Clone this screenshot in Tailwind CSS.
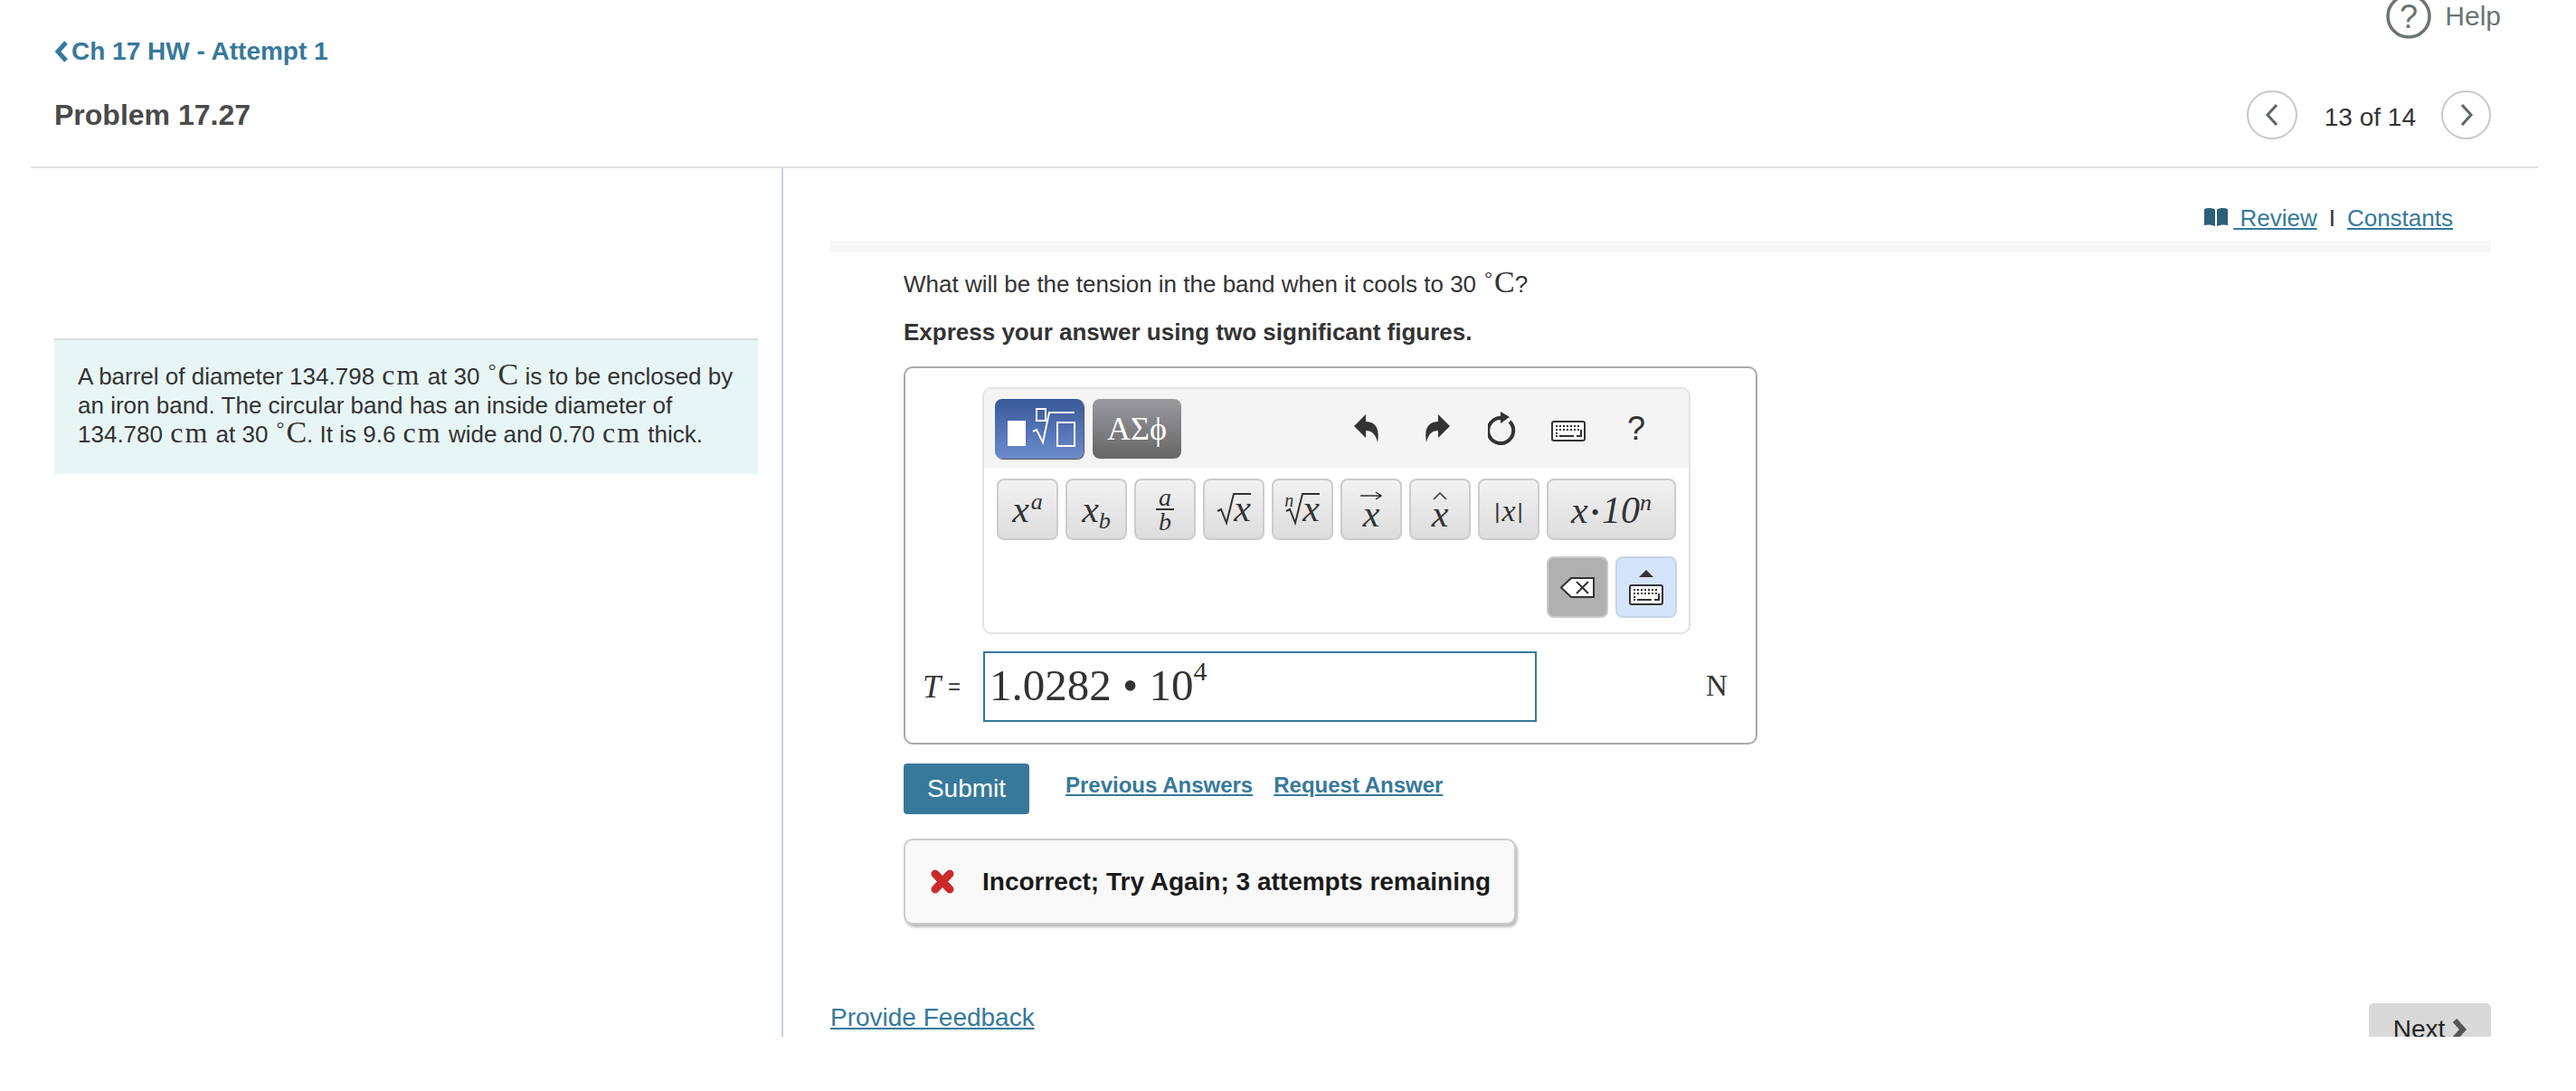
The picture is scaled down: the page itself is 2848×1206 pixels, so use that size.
<!DOCTYPE html>
<html>
<head>
<meta charset="utf-8">
<script src="https://cdn.jsdelivr.net/npm/@tailwindcss/browser@4"></script>
</head>
<body class="bg-white">
<div class="w-[2848px] h-[1206px] overflow-hidden bg-white font-['Liberation_Sans',Arial,sans-serif] text-[#333]">
  <header class="ml-[34px] w-[2772px] h-[186px] border-b-2 border-[#e0e0e0]">
    <div class="h-[42px] flex justify-end items-start pr-[41px] gap-[15px]">
      <svg class="-mt-[7px] shrink-0" width="50" height="50" viewBox="0 0 50 50"><circle cx="25" cy="25" r="23" fill="none" stroke="#6b7474" stroke-width="3.5"/><text x="25" y="38" text-anchor="middle" font-family="Liberation Sans" font-size="36" fill="#6b7474">?</text></svg>
      <span class="-mt-[6px] text-[30px] leading-[48px] text-[#6b7474]">Help</span>
    </div>
    <a class="h-[30px] pl-[26px] flex items-center text-[28px] leading-[30px] font-bold text-[#37799b]">
      <svg class="mr-[3px]" width="16" height="24" viewBox="0 0 16 24"><path d="M13 2 L4 12 L13 22" fill="none" stroke="#37799b" stroke-width="5"/></svg>Ch 17 HW - Attempt 1
    </a>
    <div class="h-[110px] pl-[26px] pr-[52px] flex justify-between items-center">
      <h1 class="text-[32px] font-bold text-[#4a4a4a]">Problem 17.27</h1>
      <div class="flex items-center">
        <span class="w-[56px] h-[54px] rounded-full border-2 border-[#c8c8c8] flex items-center justify-center"><svg width="16" height="26" viewBox="0 0 16 26"><path d="M13 2 L3 13 L13 24" fill="none" stroke="#5f6666" stroke-width="3"/></svg></span>
        <span class="ml-[30px] mr-[28px] mt-[6px] text-[28px] leading-none">13 of 14</span>
        <span class="w-[55px] h-[54px] rounded-full border-2 border-[#c8c8c8] flex items-center justify-center"><svg width="16" height="26" viewBox="0 0 16 26"><path d="M3 2 L13 13 L3 24" fill="none" stroke="#5f6666" stroke-width="3"/></svg></span>
      </div>
    </div>
  </header>

  <main class="flex h-[960px] overflow-hidden">
    <aside class="w-[866px] shrink-0 border-r-2 border-[#c5d2e0] pl-[60px] pt-[188px]">
      <div class="w-[778px] h-[150px] bg-[#e7f6f5] border-t-2 border-[#dddddd] pl-[26px] pt-[24px] text-[26px] leading-[32px] whitespace-nowrap">
        <p>A barrel of diameter 134.798 <span class="font-['Liberation_Serif',serif] text-[32px] leading-[0px] tracking-[2px] ml-[1px]">cm</span> at 30 <span class="font-['Liberation_Serif',serif] align-[8px] text-[22px] leading-[0px] ml-[2px] mr-[2px]">°</span><span class="font-['Liberation_Serif',serif] text-[34px] leading-[0px]">C</span> is to be enclosed by</p>
        <p>an iron band. The circular band has an inside diameter of</p>
        <p>134.780 <span class="font-['Liberation_Serif',serif] text-[32px] leading-[0px] tracking-[2px] ml-[1px]">cm</span> at 30 <span class="font-['Liberation_Serif',serif] align-[8px] text-[22px] leading-[0px] ml-[2px] mr-[2px]">°</span><span class="font-['Liberation_Serif',serif] text-[34px] leading-[0px]">C</span>. It is 9.6 <span class="font-['Liberation_Serif',serif] text-[32px] leading-[0px] tracking-[2px] ml-[1px]">cm</span> wide and 0.70 <span class="font-['Liberation_Serif',serif] text-[32px] leading-[0px] tracking-[2px] ml-[1px]">cm</span> thick.</p>
      </div>
    </aside>

    <section class="w-[1888px] pl-[52px]">
      <div class="h-[80px] pr-[42px] pb-[9px] flex justify-end items-end text-[26px] leading-[32px]">
        <svg class="mb-[7px] mr-[6px]" width="26" height="20" viewBox="0 0 26 20"><path d="M0 1 C4 -0.5 9 0 12 1.5 V20 C9 18.5 4 18 0 19 Z M14 1.5 C17 0 22 -0.5 26 1 V19 C22 18 17 18.5 14 20 Z" fill="#2c5f78"/></svg>
        <a class="text-[#37799b] underline">&nbsp;Review</a>
        <span class="mx-[13px]">I</span>
        <a class="text-[#37799b] underline">Constants</a>
      </div>
      <div class="w-[1836px] h-[13px] bg-[#f7f7f7]"></div>

      <div class="pl-[81px]">
        <p class="mt-[17px] text-[26px] leading-[36px] whitespace-nowrap">What will be the tension in the band when it cools to 30 <span class="font-['Liberation_Serif',serif] align-[8px] text-[22px] leading-[0px] ml-[2px] mr-[2px]">°</span><span class="font-['Liberation_Serif',serif] text-[34px] leading-[0px]">C</span>?</p>
        <p class="mt-[19px] text-[26px] leading-[32px] font-bold">Express your answer using two significant figures.</p>

        <div class="mt-[22px] w-[944px] h-[418px] border-2 border-[#aaaaaa] rounded-[10px] pt-[21px]">
          <div class="ml-[85px] w-[783px] h-[273px] border-2 border-[#e2e2e2] rounded-[10px] overflow-hidden">
            <div class="h-[87px] bg-[#f4f4f4] flex items-center pl-[12px]">
              <span class="w-[98px] h-[66px] rounded-[8px] bg-linear-to-b from-[#39589a] to-[#6c8ccc] shadow-[1px_1px_0_#555]">
                <svg width="98" height="66" viewBox="0 0 98 66"><rect x="14" y="24" width="20" height="28" fill="#fff"/><rect x="46" y="11" width="10" height="13" fill="none" stroke="#fff" stroke-width="2"/><path d="M42 36 L46 34 L53 48 L60 15 H88" fill="none" stroke="#fff" stroke-width="2"/><rect x="69" y="26" width="19" height="26" fill="none" stroke="#fff" stroke-width="2"/></svg>
              </span>
              <span class="ml-[10px] w-[98px] h-[66px] rounded-[8px] bg-linear-to-b from-[#9b9aa0] to-[#666666] flex items-center justify-center text-white text-[36px] font-['Liberation_Serif',serif]">ΑΣϕ</span>
              <svg class="ml-[191px]" width="28" height="31" viewBox="0 0 28 31"><path d="M0 13 L13 0 V8 C23 8 29 15 26 31 C24 22 20 18 13 18 V26 Z" fill="#333"/></svg>
              <svg class="ml-[50px]" width="28" height="31" viewBox="0 0 28 31"><path d="M28 13 L15 0 V8 C5 8 -1 15 2 31 C4 22 8 18 15 18 V26 Z" fill="#333"/></svg>
              <svg class="ml-[42px]" width="32" height="37" viewBox="0 0 32 37"><path d="M24 11 A14 14 0 1 1 15 7" fill="none" stroke="#333" stroke-width="4"/><path d="M14 0 L24 6 L14 13 Z" fill="#333"/></svg>
              <svg class="ml-[38px] mt-[6px]" width="38" height="23" viewBox="0 0 38 23"><rect x="1" y="1" width="36" height="21" rx="2" fill="#fff" stroke="#333" stroke-width="2"/><path d="M5 6 H33 M5 10 H31 M5 14 H8" fill="none" stroke="#333" stroke-width="2" stroke-dasharray="2 2"/><path d="M33 10 V17 H28 M9 17 H25 M5 17 H7" fill="none" stroke="#333" stroke-width="2"/></svg>
              <span class="ml-[46px] w-[20px] text-center text-[36px] leading-none">?</span>
            </div>
            <div class="pl-[14px] pt-[12px] flex gap-[8px] font-['Liberation_Serif',serif] italic text-[#333]">
              <span class="w-[68px] h-[68px] shrink-0 rounded-[8px] border-2 border-[#cccccc] bg-linear-to-b from-[#f2f2f2] to-[#dddddd] flex items-center justify-center text-[42px] leading-none"><span>x<span class="text-[26px] leading-none relative -top-[14px] ml-[2px]">a</span></span></span>
              <span class="w-[68px] h-[68px] shrink-0 rounded-[8px] border-2 border-[#cccccc] bg-linear-to-b from-[#f2f2f2] to-[#dddddd] flex items-center justify-center text-[42px] leading-none"><span>x<span class="text-[26px] leading-none relative top-[7px]">b</span></span></span>
              <span class="w-[68px] h-[68px] shrink-0 rounded-[8px] border-2 border-[#cccccc] bg-linear-to-b from-[#f2f2f2] to-[#dddddd] flex flex-col items-center justify-center text-[28px] leading-[25px]"><span>a</span><span class="w-[20px] h-[2px] bg-[#333]"></span><span>b</span></span>
              <span class="w-[68px] h-[68px] shrink-0 rounded-[8px] border-2 border-[#cccccc] bg-linear-to-b from-[#f2f2f2] to-[#dddddd] flex items-center justify-center text-[42px] leading-none"><svg class="-mr-[1px]" width="20" height="36" viewBox="0 0 20 36"><path d="M1 20 L5 18 L11 33 L19 1 H20" fill="none" stroke="#333" stroke-width="2"/></svg><span class="border-t-2 border-[#333] h-[36px] leading-[30px]">x</span></span>
              <span class="w-[68px] h-[68px] shrink-0 rounded-[8px] border-2 border-[#cccccc] bg-linear-to-b from-[#f2f2f2] to-[#dddddd] flex items-center justify-center text-[42px] leading-none"><span class="relative flex"><span class="absolute -left-[1px] -top-[2px] text-[20px] leading-none">n</span><svg class="-mr-[1px]" width="20" height="36" viewBox="0 0 20 36"><path d="M1 20 L5 18 L11 33 L19 1 H20" fill="none" stroke="#333" stroke-width="2"/></svg><span class="border-t-2 border-[#333] h-[36px] leading-[30px]">x</span></span></span>
              <span class="w-[68px] h-[68px] shrink-0 rounded-[8px] border-2 border-[#cccccc] bg-linear-to-b from-[#f2f2f2] to-[#dddddd] flex flex-col items-center justify-center text-[42px] leading-none"><svg width="24" height="10" viewBox="0 0 24 10"><path d="M0 5 H22 M17 1 L23 5 L17 9" fill="none" stroke="#333" stroke-width="1.5"/></svg><span class="leading-[30px]">x</span></span>
              <span class="w-[68px] h-[68px] shrink-0 rounded-[8px] border-2 border-[#cccccc] bg-linear-to-b from-[#f2f2f2] to-[#dddddd] flex flex-col items-center justify-center text-[42px] leading-none"><svg width="18" height="10" viewBox="0 0 18 10"><path d="M2 9 L9 2 L16 9" fill="none" stroke="#333" stroke-width="1.5"/></svg><span class="leading-[30px]">x</span></span>
              <span class="w-[68px] h-[68px] shrink-0 rounded-[8px] border-2 border-[#cccccc] bg-linear-to-b from-[#f2f2f2] to-[#dddddd] flex items-center justify-center text-[34px] leading-none pt-[4px]"><span class="not-italic font-['Liberation_Sans',sans-serif] text-[24px] mr-[2px]">|</span>x<span class="not-italic font-['Liberation_Sans',sans-serif] text-[24px] ml-[2px]">|</span></span>
              <span class="w-[143px] h-[68px] shrink-0 rounded-[8px] border-2 border-[#cccccc] bg-linear-to-b from-[#f2f2f2] to-[#dddddd] flex items-center justify-center text-[42px] leading-none pt-[2px]"><span>x<span class="text-[26px] relative -top-[3px] mx-[3px]">•</span>10<span class="text-[26px] leading-none relative -top-[14px]">n</span></span></span>
            </div>
            <div class="pr-[13px] pt-[18px] flex justify-end gap-[8px]">
              <span class="w-[68px] h-[68px] rounded-[8px] border-2 border-[#c8c8c8] bg-[#b0b0b0] flex items-center justify-center"><svg width="38" height="23" viewBox="0 0 38 23"><path d="M37 1 H12 L1 11.5 L12 22 H37 Z" fill="#fff" stroke="#333" stroke-width="2"/><path d="M18 5 L31 18 M31 5 L18 18" stroke="#333" stroke-width="2"/></svg></span>
              <span class="w-[68px] h-[68px] rounded-[8px] border-2 border-[#c8d4e4] bg-[#d4e4fb] flex flex-col items-center justify-center gap-[8px]"><svg width="16" height="8" viewBox="0 0 16 8"><path d="M8 0 L16 8 H0 Z" fill="#333"/></svg><svg width="38" height="23" viewBox="0 0 38 23"><rect x="1" y="1" width="36" height="21" rx="2" fill="#fff" stroke="#333" stroke-width="2"/><path d="M5 6 H33 M5 10 H31 M5 14 H8" fill="none" stroke="#333" stroke-width="2" stroke-dasharray="2 2"/><path d="M33 10 V17 H28 M9 17 H25 M5 17 H7" fill="none" stroke="#333" stroke-width="2"/></svg></span>
            </div>
          </div>
          <div class="mt-[19px] flex items-center font-['Liberation_Serif',serif]">
            <span class="w-[86px] pl-[19px] flex items-center"><i class="text-[36px] leading-none">T</i><span class="ml-[8px] font-['Liberation_Sans',sans-serif] text-[24px] leading-none">=</span></span>
            <div class="w-[612px] h-[78px] border-2 border-[#37799b] pl-[5px] text-[49px] leading-[72px] whitespace-pre">1.0282 • 10<span class="text-[30px] leading-none relative -top-[22px]">4</span></div>
            <span class="ml-[187px] text-[33px] leading-none -mt-[2px]">N</span>
          </div>
        </div>

        <div class="mt-[21px] flex items-start">
          <button class="w-[139px] h-[56px] rounded-[4px] bg-[#37799b] text-white text-[28px] leading-none">Submit</button>
          <a class="ml-[40px] mt-[10px] text-[24px] leading-[28px] font-bold text-[#37799b] underline">Previous Answers</a>
          <a class="ml-[23px] mt-[10px] text-[24px] leading-[28px] font-bold text-[#37799b] underline">Request Answer</a>
        </div>

        <div class="mt-[27px] w-[677px] h-[95px] rounded-[10px] border-2 border-[#cccccc] bg-[#f9f9f9] shadow-[2px_3px_3px_#bbbbbb] flex items-center">
          <svg class="ml-[27px]" width="28" height="27" viewBox="0 0 28 27"><path d="M6 5 L22 22 M22 5 L6 22" stroke="#cc2929" stroke-width="9" stroke-linecap="round"/></svg>
          <span class="ml-[30px] text-[28px] font-bold text-[#1a1a1a]">Incorrect; Try Again; 3 attempts remaining</span>
        </div>
      </div>

      <div class="mt-[87px] w-[1836px] flex justify-between items-start">
        <a class="text-[28px] leading-[32px] text-[#37799b] underline">Provide Feedback</a>
        <span class="w-[135px] h-[60px] shrink-0 rounded-t-[5px] bg-[#d9d9d9] flex items-start justify-center gap-[8px] pt-[13px] text-[28px] leading-[32px] text-[#222]">Next<svg class="mt-[4px]" width="16" height="24" viewBox="0 0 16 24"><path d="M3 2 L12 12 L3 22" fill="none" stroke="#555" stroke-width="6"/></svg></span>
      </div>
    </section>
  </main>
</div>
</body>
</html>
